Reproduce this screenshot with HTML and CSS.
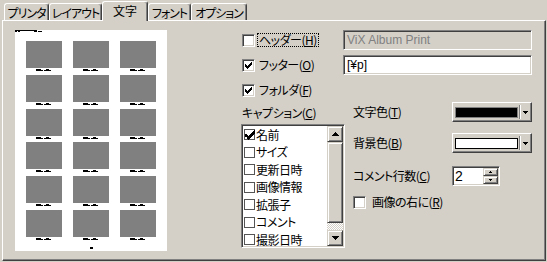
FILE: index.html
```html
<!DOCTYPE html>
<html lang="ja">
<head>
<meta charset="utf-8">
<title>文字</title>
<link rel="stylesheet" href="styles.css">
</head>
<body>
<div class="tabs">
  <div class="tab t1">プリンタ</div>
  <div class="tab t2">レイアウト</div>
  <div class="tab sel">文字</div>
  <div class="tab t4">フォント</div>
  <div class="tab t5">オプション</div>
</div>
<div class="panel">
  <div class="page">
    <svg class="hdrmark" width="28" height="3" viewBox="0 0 28 3" shape-rendering="crispEdges"><path d="M0 0h19v1H0z M0 1h2v1H0z M3 1h2v1H3z M19 0h3v2h-3z M23 1h4v1h-4z" fill="#000"/></svg>
    <div class="grid">
      <div class="cell"><div class="thumb"></div><div class="cap"></div></div>
      <div class="cell"><div class="thumb"></div><div class="cap"></div></div>
      <div class="cell"><div class="thumb"></div><div class="cap"></div></div>
      <div class="cell"><div class="thumb"></div><div class="cap"></div></div>
      <div class="cell"><div class="thumb"></div><div class="cap"></div></div>
      <div class="cell"><div class="thumb"></div><div class="cap"></div></div>
      <div class="cell"><div class="thumb"></div><div class="cap"></div></div>
      <div class="cell"><div class="thumb"></div><div class="cap"></div></div>
      <div class="cell"><div class="thumb"></div><div class="cap"></div></div>
      <div class="cell"><div class="thumb"></div><div class="cap"></div></div>
      <div class="cell"><div class="thumb"></div><div class="cap"></div></div>
      <div class="cell"><div class="thumb"></div><div class="cap"></div></div>
      <div class="cell"><div class="thumb"></div><div class="cap"></div></div>
      <div class="cell"><div class="thumb"></div><div class="cap"></div></div>
      <div class="cell"><div class="thumb"></div><div class="cap"></div></div>
      <div class="cell"><div class="thumb"></div><div class="cap"></div></div>
      <div class="cell"><div class="thumb"></div><div class="cap"></div></div>
      <div class="cell"><div class="thumb"></div><div class="cap"></div></div>
    </div>
    <div class="pgno"></div>
  </div>

  <div class="controls">
    <div class="row">
      <div class="chkgroup"><span class="cb"></span><span class="lbl focus">ヘッダー(<u>H</u>)</span></div>
      <div class="edit dis">ViX Album Print</div>
    </div>
    <div class="row">
      <div class="chkgroup"><span class="cb"><svg width="7" height="7" viewBox="0 0 7 7" shape-rendering="crispEdges"><path d="M0 2h1v3H0z M1 3h1v3H1z M2 4h1v3H2z M3 3h1v3H3z M4 2h1v3H4z M5 1h1v3H5z M6 0h1v3H6z" fill="#000"/></svg></span><span class="lbl">フッター(<u>O</u>)</span></div>
      <div class="edit">[¥p]</div>
    </div>
    <div class="row">
      <div class="chkgroup"><span class="cb"><svg width="7" height="7" viewBox="0 0 7 7" shape-rendering="crispEdges"><path d="M0 2h1v3H0z M1 3h1v3H1z M2 4h1v3H2z M3 3h1v3H3z M4 2h1v3H4z M5 1h1v3H5z M6 0h1v3H6z" fill="#000"/></svg></span><span class="lbl">フォルダ(<u>F</u>)</span></div>
    </div>

    <div class="lower">
      <div class="capcol">
        <div class="caplbl">キャプション(<u>C</u>)</div>
        <div class="listbox">
          <div class="items">
            <div class="item"><span class="ibox"><svg class="bigchk" width="11" height="10" viewBox="0 0 11 10" shape-rendering="crispEdges"><path d="M0 4h2v3H0z M2 5h1v4H2z M3 6h1v4H3z M4 5h1v4H4z M5 4h1v4H5z M6 3h1v4H6z M7 2h1v4H7z M8 1h1v4H8z M9 0h1v4H9z" fill="#000"/></svg></span>名前</div>
            <div class="item"><span class="ibox"></span>サイズ</div>
            <div class="item"><span class="ibox"></span>更新日時</div>
            <div class="item"><span class="ibox"></span>画像情報</div>
            <div class="item"><span class="ibox"></span>拡張子</div>
            <div class="item"><span class="ibox"></span>コメント</div>
            <div class="item"><span class="ibox"></span>撮影日時</div>
          </div>
          <div class="vscroll">
            <div class="sbtn"><svg width="7" height="4" viewBox="0 0 7 4" shape-rendering="crispEdges"><path d="M3 0h1v1H3z M2 1h3v1H2z M1 2h5v1H1z M0 3h7v1H0z" fill="#000"/></svg></div>
            <div class="sthumb"></div>
            <div class="strack"></div>
            <div class="sbtn"><svg width="7" height="4" viewBox="0 0 7 4" shape-rendering="crispEdges"><path d="M0 0h7v1H0z M1 1h5v1H1z M2 2h3v1H2z M3 3h1v1H3z" fill="#000"/></svg></div>
          </div>
        </div>
      </div>

      <div class="settings">
        <div class="srow">
          <span class="slbl">文字色(<u>T</u>)</span>
          <div class="combo"><span class="swatch black"></span><span class="sep"></span><span class="drop"><svg width="5" height="3" viewBox="0 0 5 3" shape-rendering="crispEdges"><path d="M0 0h5v1H0z M1 1h3v1H1z M2 2h1v1H2z" fill="#000"/></svg></span></div>
        </div>
        <div class="srow s2">
          <span class="slbl">背景色(<u>B</u>)</span>
          <div class="combo"><span class="swatch white"></span><span class="sep"></span><span class="drop"><svg width="5" height="3" viewBox="0 0 5 3" shape-rendering="crispEdges"><path d="M0 0h5v1H0z M1 1h3v1H1z M2 2h1v1H2z" fill="#000"/></svg></span></div>
        </div>
        <div class="srow s3">
          <span class="slbl">コメント行数(<u>C</u>)</span>
          <div class="spin">
            <span class="spintxt">2</span>
            <span class="spinbtns">
              <span class="sp"><svg width="3" height="2" viewBox="0 0 3 2" shape-rendering="crispEdges"><path d="M1 0h1v1H1z M0 1h3v1H0z" fill="#000"/></svg></span>
              <span class="sp"><svg width="3" height="2" viewBox="0 0 3 2" shape-rendering="crispEdges"><path d="M0 0h3v1H0z M1 1h1v1H1z" fill="#000"/></svg></span>
            </span>
          </div>
        </div>
        <div class="srow s4">
          <span class="cb"></span><span class="lbl2">画像の右に(<u>R</u>)</span>
        </div>
      </div>
    </div>
  </div>
</div>
</body>
</html>
```
FILE: styles.css
```css
* { box-sizing: border-box; }
html, body { margin: 0; padding: 0; }
body {
  width: 547px;
  height: 262px;
  overflow: hidden;
  background: #d4d0c8;
  color: #000;
  font-family: "Noto Sans CJK JP", sans-serif;
  font-size: 12px;
  line-height: 16px;
  font-feature-settings: "palt";
  letter-spacing: -0.5px;
}
u { text-decoration: underline; text-underline-offset: 1px; }

/* tabs */
.tabs {
  display: flex;
  align-items: flex-end;
  height: 20px;
  padding-left: 4px;
  position: relative;
  z-index: 1;
}
.tab {
  height: 17px;
  border-top: 1px solid #fff;
  border-left: 1px solid #fff;
  border-right: 1px solid #404040;
  box-shadow: inset -1px 0 #808080;
  border-radius: 3px 3px 0 0;
  display: flex;
  align-items: center;
  justify-content: center;
  padding-top: 1px;
  background: #d4d0c8;
  white-space: nowrap;
  letter-spacing: -1px;
  flex: none;
}
.t1 { width: 45px; }
.t2 { width: 53px; }
.sel { width: 46px; height: 20px; margin-bottom: -1px; padding-top: 0; padding-bottom: 2px; letter-spacing: 0; }
.t4 { width: 43px; }
.t5 { width: 56px; }

/* panel */
.panel {
  margin-left: 2px;
  width: 544px;
  height: 241px;
  border: 1px solid;
  border-color: #fff #404040 #404040 #fff;
  box-shadow: inset -1px -1px #808080;
  padding: 9px 0 0 12px;
  display: flex;
  align-items: flex-start;
}

/* preview page */
.page {
  width: 152px;
  height: 221px;
  background: #fff;
  display: flex;
  flex-direction: column;
  padding-left: 11px;
  flex: none;
}
.hdrmark { display: block; margin-left: -11px; }
.grid {
  display: grid;
  grid-template-columns: repeat(3, 36px);
  column-gap: 11px;
  row-gap: 3.8px;
  margin-top: 8px;
}
.thumb { height: 27px; background: #808080; }
.cap {
  width: 15px;
  height: 2px;
  margin: 1px 0 0 10px;
  background:
    linear-gradient(#000, #000) 0 0 / 5px 2px no-repeat,
    linear-gradient(#000, #000) 5px 1px / 2px 1px no-repeat,
    linear-gradient(#000, #000) 8px 1px / 7px 1px no-repeat,
    linear-gradient(#000, #000) 10px 0 / 3px 1px no-repeat;
}
.pgno { width: 3px; height: 2px; background: #000; margin: 7px 0 0 64px; }

/* controls */
.controls {
  margin-left: 75px;
  display: flex;
  flex-direction: column;
}
.row { display: flex; align-items: center; height: 20px; }
.row + .row { margin-top: 5px; }
.chkgroup { width: 101px; display: flex; align-items: center; flex: none; }
.cb {
  width: 13px;
  height: 13px;
  flex: none;
  background: #fff;
  border: 1px solid;
  border-color: #808080 #fff #fff #808080;
  box-shadow: inset 1px 1px #404040, inset -1px -1px #d4d0c8;
  display: flex;
  align-items: center;
  justify-content: center;
}
.cb svg { display: block; }
.lbl { margin-left: 4px; white-space: nowrap; }
.focus { outline: 1px dotted #000; line-height: 12px; padding: 0 1px; margin-left: 3px; }
.edit {
  width: 189px;
  height: 20px;
  flex: none;
  border: 1px solid;
  border-color: #808080 #fff #fff #808080;
  box-shadow: inset 1px 1px #404040, inset -1px -1px #d4d0c8;
  background: #fff;
  font-family: "Liberation Sans", sans-serif;
  font-size: 12px;
  line-height: 16px;
  letter-spacing: 0;
  padding: 1px 3px;
  white-space: nowrap;
}
.edit.dis { background: #d4d0c8; color: #808080; }

.lower { display: flex; align-items: flex-start; margin-top: 2px; }
.capcol { display: flex; flex-direction: column; flex: none; }
.caplbl { height: 16px; margin: 3px 0; white-space: nowrap; }
.listbox {
  margin-left: -1px;
  width: 104px;
  height: 124px;
  border: 1px solid;
  border-color: #808080 #fff #fff #808080;
  box-shadow: inset 1px 1px #404040, inset -1px -1px #d4d0c8;
  background: #fff;
  display: flex;
  padding: 1px;
}
.items { flex: 1; overflow: hidden; }
.item { height: 17.5px; display: flex; align-items: center; white-space: nowrap; }
.ibox {
  width: 11px;
  height: 11px;
  flex: none;
  border: 1px solid #555;
  margin: 0 1px 0 1px;
  position: relative;
}
.bigchk { position: absolute; left: 0; top: 0; display: block; }
.vscroll { width: 16px; display: flex; flex-direction: column; flex: none; }
.sbtn, .sthumb, .sp {
  background: #d4d0c8;
  border: 1px solid;
  border-color: #d4d0c8 #404040 #404040 #d4d0c8;
  box-shadow: inset 1px 1px #fff, inset -1px -1px #808080;
}
.sbtn { height: 16px; display: flex; align-items: center; justify-content: center; }
.sbtn svg { display: block; }
.sthumb { height: 81px; }
.strack {
  height: 7px;
  background: repeating-conic-gradient(#fff 0 25%, #d4d0c8 0 50%) 0 0 / 2px 2px;
}

.settings { margin-left: 8px; display: flex; flex-direction: column; }
.srow { display: flex; align-items: center; height: 20px; }
.s2 { margin-top: 11px; }
.s3 { margin-top: 13px; }
.s4 { margin-top: 6px; }
.slbl { width: 99px; white-space: nowrap; flex: none; }
.combo {
  width: 80px;
  height: 20px;
  flex: none;
  background: #d4d0c8;
  border: 1px solid;
  border-color: #fff #404040 #404040 #fff;
  box-shadow: inset -1px -1px #808080;
  display: flex;
  align-items: center;
  padding-left: 2px;
}
.swatch { width: 63px; height: 11px; border: 1px solid #000; flex: none; }
.black { background: #000; border-color: #808080; }
.white { background: #fff; }
.sep {
  width: 2px;
  height: 14px;
  margin-left: 1px;
  border-left: 1px solid #808080;
  border-right: 1px solid #fff;
}
.drop { flex: 1; display: flex; align-items: center; justify-content: center; padding-right: 1px; }
.drop svg { display: block; }
.spin {
  width: 48px;
  height: 20px;
  flex: none;
  border: 1px solid;
  border-color: #808080 #fff #fff #808080;
  box-shadow: inset 1px 1px #404040, inset -1px -1px #d4d0c8;
  background: #fff;
  display: flex;
  padding: 1px;
}
.spintxt {
  flex: 1;
  font-family: "Liberation Sans", sans-serif;
  font-size: 14px;
  line-height: 16px;
  letter-spacing: 0;
  padding-left: 1px;
}
.spinbtns { width: 15px; display: flex; flex-direction: column; }
.sp { flex: 1; display: flex; align-items: center; justify-content: center; }
.sp svg { display: block; }
.lbl2 { margin-left: 6px; white-space: nowrap; }
```
